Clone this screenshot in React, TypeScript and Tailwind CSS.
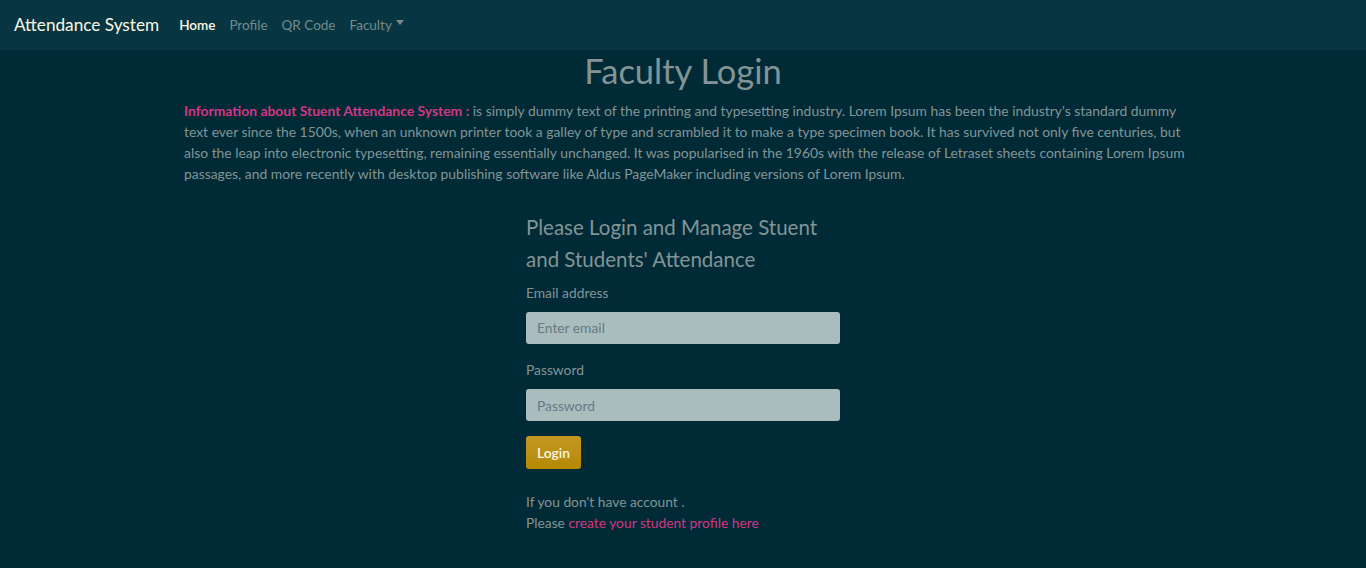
import React from "react";

export default function App() {
  const font = { fontFamily: '"Source Sans Pro", Lato, "Open Sans", sans-serif' };
  return (
    <div className="min-h-[568px] bg-[#002b36] text-[#839496] text-[14px] leading-[1.4]" style={font}>
      <nav className="h-[50px] bg-[#073642] flex items-center px-[14px]">
        <span className="text-[17.2px] text-[#fdf6e3] mr-[20px] mt-[1px]">Attendance System</span>
        <div className="flex items-center gap-[14px] text-[13.5px]">
          <span className="text-[#fdf6e3] font-semibold">Home</span>
          <span className="text-[#93a1a1]/80">Profile</span>
          <span className="text-[#93a1a1]/80">QR Code</span>
          <span className="text-[#93a1a1]/80 flex items-center">
            Faculty
            <span className="ml-[4px] inline-block w-0 h-0 border-l-[4px] border-r-[4px] border-t-[5px] border-l-transparent border-r-transparent border-t-[#93a1a1]/80 mb-[4px]" />
          </span>
        </div>
      </nav>
      <div className="w-[998px] mx-auto">
        <h1 className="text-center text-[34.5px] leading-[1.2] text-[#839496] mb-[9px]">Faculty Login</h1>
        <p className="text-[13.9px] leading-[21px] whitespace-nowrap">
          <b className="text-[#d33682] font-bold">Information about Stuent Attendance System :</b> is simply dummy text of the printing and typesetting industry. Lorem Ipsum has been the industry's standard dummy
          <br />
          text ever since the 1500s, when an unknown printer took a galley of type and scrambled it to make a type specimen book. It has survived not only five centuries, but
          <br />
          also the leap into electronic typesetting, remaining essentially unchanged. It was popularised in the 1960s with the release of Letraset sheets containing Lorem Ipsum
          <br />
          passages, and more recently with desktop publishing software like Aldus PageMaker including versions of Lorem Ipsum.
        </p>
        <div className="w-[315px] ml-[342px] mt-[27px]">
          <h4 className="text-[20.5px] leading-[32px] text-[#839496]">Please Login and Manage Stuent and Students' Attendance</h4>
          <div className="mt-[8px] text-[13.8px]">Email address</div>
          <input
            className="mt-[9px] w-[314px] h-[32px] rounded-[3px] bg-[#a9bdbd] px-[11px] text-[13.8px] placeholder:text-[#657b83] outline-none"
            placeholder="Enter email"
          />
          <div className="mt-[16px] text-[13.8px]">Password</div>
          <input
            className="mt-[10px] w-[314px] h-[32px] rounded-[3px] bg-[#a9bdbd] px-[11px] text-[13.8px] placeholder:text-[#657b83] outline-none"
            placeholder="Password"
          />
          <button className="mt-[15px] block h-[33px] px-[11px] rounded-[3px] bg-gradient-to-b from-[#c39822] to-[#b58900] text-[#fdf6e3] font-semibold text-[13.8px]">
            Login
          </button>
          <div className="mt-[22px] text-[13.8px] leading-[21px]">
            If you don't have account .<br />
            Please <span className="text-[#d33682]">create your student profile here</span>
          </div>
        </div>
      </div>
    </div>
  );
}
